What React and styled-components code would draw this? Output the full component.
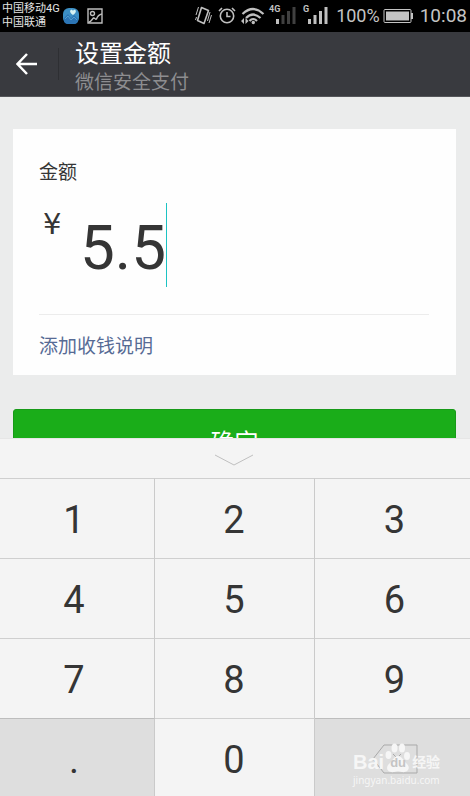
import React, { useState } from "react";
import styled, { createGlobalStyle } from "styled-components";

const GlobalStyle = createGlobalStyle`
  *, *::before, *::after { box-sizing: border-box; }
  body { margin: 0; background: #ebebeb; }
  button, input { font: inherit; color: inherit; }
`;

const Screen = styled.div`
  display: flex;
  flex-direction: column;
  height: 100vh;
  overflow: hidden;
  background: #ebecec;
  color: #353535;
  font-family: Roboto, "Noto Sans CJK SC", sans-serif;
`;

const StatusBar = styled.div`
  display: flex;
  flex: none;
  align-items: center;
  height: 32px;
  padding: 0 3px 0 2px;
  background: #000;
  color: #c4c4c4;
`;

const Carriers = styled.div`
  width: 61px;
  font-size: 11px;
  line-height: 14px;
  color: #e4e4e4;
  white-space: nowrap;
`;

const Notices = styled.div`
  display: flex;
  flex: 1;
  gap: 8px;
`;

const StatusIcons = styled.div`
  display: flex;
  align-items: center;
`;

const Percent = styled.span`
  margin: 0 3px 0 8px;
  font-size: 18px;
  line-height: 32px;
`;

const Clock = styled.time`
  margin-left: 7px;
  font-size: 19px;
  line-height: 32px;
`;

const Header = styled.header`
  display: flex;
  flex: none;
  align-items: center;
  height: 65px;
  background: #393a3f;
  border-bottom: 1px solid #55565a;
`;

const BackButton = styled.button`
  display: flex;
  flex: none;
  align-items: center;
  width: 59px;
  height: 32px;
  padding: 0 0 0 16px;
  border: 0;
  border-right: 1px solid #2e2f33;
  background: none;
`;

const Titles = styled.div`
  padding: 5px 0 0 16px;
`;

const Title = styled.h1`
  margin: 0;
  font-size: 24px;
  font-weight: 400;
  line-height: 32px;
  color: #fff;
`;

const Subtitle = styled.p`
  margin: 0;
  font-size: 19px;
  line-height: 26px;
  color: #8d8d90;
`;

const Content = styled.main`
  flex: 1;
  min-height: 0;
  padding: 32px 14px 0 13px;
  overflow: hidden;
`;

const Card = styled.section`
  padding: 29px 27px 0 26px;
  background: #fefefe;
`;

const Label = styled.label`
  display: block;
  font-size: 19px;
  line-height: 30px;
`;

const AmountRow = styled.div`
  display: flex;
  align-items: flex-start;
  height: 127px;
  padding-top: 15px;
  border-bottom: 1px solid #ececec;
`;

const Currency = styled.span`
  width: 41px;
  padding-left: 4px;
  font-family: "DejaVu Sans", sans-serif;
  font-size: 29px;
  line-height: 42px;
`;

const AmountField = styled.div`
  position: relative;
  flex: 1;
  height: 84px;
`;

const AmountInput = styled.input`
  width: 100%;
  height: 84px;
  padding: 4px 0 0;
  border: 0;
  outline: 0;
  background: none;
  font-size: 62px;
  line-height: 80px;
`;

const Caret = styled.span`
  position: absolute;
  top: 0;
  left: 86px;
  width: 1px;
  height: 84px;
  background: #1cc3c3;
`;

const NoteLink = styled.a`
  display: block;
  padding-top: 4px;
  font-size: 19px;
  line-height: 56px;
  color: #576b95;
  text-decoration: none;
`;

const ConfirmButton = styled.button`
  display: block;
  width: 100%;
  height: 62px;
  margin-top: 34px;
  padding: 6px 0 0;
  border: 1px solid #179a18;
  border-radius: 3px;
  background: #1aad19;
  color: #fff;
  font-size: 24px;
  line-height: 54px;
`;

const Keyboard = styled.section`
  flex: none;
  background: #f4f4f4;
`;

const CollapseButton = styled.button`
  display: flex;
  align-items: center;
  justify-content: center;
  width: 100%;
  height: 40px;
  padding: 2px 2px 0 0;
  border: 0;
  border-top: 1px solid #e6e6e6;
  background: none;
`;

const Keys = styled.div`
  display: grid;
  grid-template-columns: 155fr 160fr 155fr;
  grid-template-rows: 80px 80px 80px 78px;
`;

const columnPadding = { left: "0 6px 0 0", middle: "0 1px 0 0", right: "0 0 0 4px" };

const Key = styled.button`
  display: flex;
  align-items: center;
  justify-content: center;
  padding: ${({ $column }) => columnPadding[$column]};
  padding-top: ${({ $last }) => ($last ? "4px" : "2px")};
  border: 0;
  border-top: 1px solid ${({ $dark }) => ($dark ? "#bdbdbd" : "#cfcfcf")};
  border-right: ${({ $column }) => ($column === "right" ? "0" : "1px solid #cacaca")};
  background: ${({ $dark }) => ($dark ? "#dedede" : "#f4f4f4")};
  font-size: 38px;
  line-height: 46px;
`;

const DeleteCell = styled.div`
  position: relative;
  display: grid;
`;

const Watermark = styled.div`
  position: absolute;
  top: 23px;
  left: 38px;
  color: #f6f6f6;
  pointer-events: none;
`;

const Brand = styled.div`
  display: flex;
  align-items: flex-end;
  height: 32px;
  font-family: "Liberation Sans", "Noto Sans CJK SC", sans-serif;
  line-height: 22px;
`;

const BrandName = styled.span`
  font-size: ${({ $small }) => ($small ? "14px" : "20px")};
  font-weight: 700;
`;

const Paw = styled.span`
  position: relative;
  display: grid;
  place-items: end center;
  width: 28px;
  height: 32px;
`;

const PawText = styled.span`
  position: absolute;
  bottom: 0;
  font-size: 13px;
  font-weight: 700;
  line-height: 20px;
  color: #c4c4c4;
`;

const Site = styled.div`
  font-family: "Noto Sans", sans-serif;
  font-size: 10px;
  line-height: 14px;
`;

function AppIcon() {
  return (
    <svg width="16" height="16" viewBox="0 0 16 16" aria-hidden="true">
      <rect width="16" height="16" rx="6" fill="#3c8fc4" />
      <path d="M1 10l4-4 3 4 3-3 4 4v1a4 4 0 0 1-4 4H5a4 4 0 0 1-4-4z" fill="#2c75b5" />
      <path d="M2 11l3-3 3 4 3-3 3 3" fill="none" stroke="#5aa9d4" strokeWidth=".8" />
      <path d="M10 7C4 3 9 0 10 3c1-3 6 0 0 4z" fill="#d7f3f3" />
    </svg>
  );
}

function PictureIcon() {
  return (
    <svg width="16" height="16" viewBox="0 0 16 16" fill="none" stroke="#bdbdbd" strokeWidth="1.4" aria-hidden="true">
      <path d="M1 1h14v14H1z" />
      <circle cx="5.5" cy="5.5" r="2" />
      <path d="M1.500 14.500c3-1 4-4 5-4.500 2 0 2 2 3 1 1-3 3-4.500 5.500-5" />
    </svg>
  );
}

function SystemIcons() {
  return (
    <svg width="135" height="32" viewBox="193 0 135 32" fill="none" stroke="#c0c0c0" strokeWidth="1.6" role="img" aria-label="振动 闹钟 无线网络 信号">
      <path d="M201.500 7.500l7 3-4.500 13-6.500-3z" strokeLinejoin="round" />
      <path d="M198.500 7l-2.500 8M196.500 17l-1 3M210 12l-2.500 9M211.500 15l-2.500 8" strokeWidth="1" />
      <circle cx="227" cy="16" r="6.700" />
      <path d="M227 12v4.500h3.500M219 11l3-3M232 8l3 3" />
      <path d="M242.500 14q10.500-10 21 0M246 18q7-7 14.500 0M249.500 21q3.500-4 7.500 0" strokeWidth="2.200" />
      <g fill="#c0c0c0" stroke="none">
        <circle cx="253.300" cy="22.500" r="1.700" />
        <path d="M241 21l3-3v6zM248.500 21l-3-3v6z" />
        <path d="M276 19h3v5h-3zM308 19h3v5h-3zM313.500 15h3v9h-3zM319 11h3v13h-3zM324.500 7h3v17h-3z" />
        <path d="M281.500 15h3v9h-3zM287 11h3v13h-3zM292.500 7h3v17h-3z" fill="#404040" />
        <g fontFamily="Roboto, sans-serif" fontWeight="700" fontSize="9">
          <text x="269" y="12">4G</text>
          <text x="303" y="12">G</text>
        </g>
      </g>
    </svg>
  );
}

function BatteryIcon() {
  return (
    <svg width="30" height="16" viewBox="0 0 30 16" aria-hidden="true">
      <rect x="1" y="1.500" width="27" height="13" rx="1" fill="none" stroke="#c4c4c4" />
      <path d="M3 3.500h23v9H3zM28 5h2v6h-2z" fill="#c4c4c4" />
    </svg>
  );
}

function BackIcon() {
  return (
    <svg width="22" height="22" viewBox="0 0 22 22" fill="none" stroke="#fff" strokeWidth="2.500" aria-hidden="true">
      <path d="M21 11H2M11 1l-9.500 10 9.500 10" />
    </svg>
  );
}

function ChevronIcon() {
  return (
    <svg width="38" height="12" viewBox="0 0 38 12" fill="none" stroke="#bfbfbf" aria-hidden="true">
      <path d="M0 1l19 10L38 1" />
    </svg>
  );
}

function DeleteIcon() {
  return (
    <svg width="46" height="30" viewBox="0 0 46 30" fill="none" stroke="#a9a9a9" aria-hidden="true">
      <path d="M1 15L12 1h33v28H12zM21 10l8 8M29 10l-8 8" />
    </svg>
  );
}

function PawIcon() {
  return (
    <svg width="28" height="30" viewBox="0 0 28 30" fill="#f6f6f6" aria-hidden="true">
      <ellipse cx="4.500" cy="12" rx="3" ry="4" />
      <ellipse cx="10.500" cy="5" rx="3" ry="4.500" />
      <ellipse cx="18" cy="5" rx="3" ry="4.500" />
      <ellipse cx="23" cy="13" rx="3" ry="4" />
      <path d="M14 13c4 0 5 4 8 7 6 5 1 10-4 9-3-1-5-1-8 0-6 1-10-4-4-9 3-3 4-7 8-7z" />
    </svg>
  );
}

const columns = ["left", "middle", "right"];
const digits = ["1", "2", "3", "4", "5", "6", "7", "8", "9"];

export default function App() {
  const [amount, setAmount] = useState("5.5");
  const add = (key) => setAmount((value) => value + key);

  return (
    <Screen>
      <GlobalStyle />
      <StatusBar>
        <Carriers>
          <div>中国移动4G</div>
          <div>中国联通</div>
        </Carriers>
        <Notices>
          <AppIcon />
          <PictureIcon />
        </Notices>
        <StatusIcons>
          <SystemIcons />
          <Percent>100%</Percent>
          <BatteryIcon />
          <Clock>10:08</Clock>
        </StatusIcons>
      </StatusBar>
      <Header>
        <BackButton type="button" aria-label="返回">
          <BackIcon />
        </BackButton>
        <Titles>
          <Title>设置金额</Title>
          <Subtitle>微信安全支付</Subtitle>
        </Titles>
      </Header>
      <Content>
        <Card>
          <Label htmlFor="amount">金额</Label>
          <AmountRow>
            <Currency>¥</Currency>
            <AmountField>
              <AmountInput id="amount" inputMode="none" value={amount} onChange={(e) => setAmount(e.target.value)} />
              <Caret />
            </AmountField>
          </AmountRow>
          <NoteLink href="#note">添加收钱说明</NoteLink>
        </Card>
        <ConfirmButton type="button">确定</ConfirmButton>
      </Content>
      <Keyboard aria-label="数字键盘">
        <CollapseButton type="button" aria-label="收起键盘">
          <ChevronIcon />
        </CollapseButton>
        <Keys>
          {digits.map((digit, i) => (
            <Key key={digit} type="button" $column={columns[i % 3]} onClick={() => add(digit)}>
              {digit}
            </Key>
          ))}
          <Key type="button" $column="left" $dark $last onClick={() => add(".")}>.</Key>
          <Key type="button" $column="middle" $last onClick={() => add("0")}>0</Key>
          <DeleteCell>
            <Key type="button" $column="right" $dark aria-label="删除" onClick={() => setAmount((v) => v.slice(0, -1))}>
              <DeleteIcon />
            </Key>
            <Watermark>
              <Brand>
                <BrandName>Bai</BrandName>
                <Paw>
                  <PawIcon />
                  <PawText>du</PawText>
                </Paw>
                <BrandName $small>经验</BrandName>
              </Brand>
              <Site>jingyan.baidu.com</Site>
            </Watermark>
          </DeleteCell>
        </Keys>
      </Keyboard>
    </Screen>
  );
}
